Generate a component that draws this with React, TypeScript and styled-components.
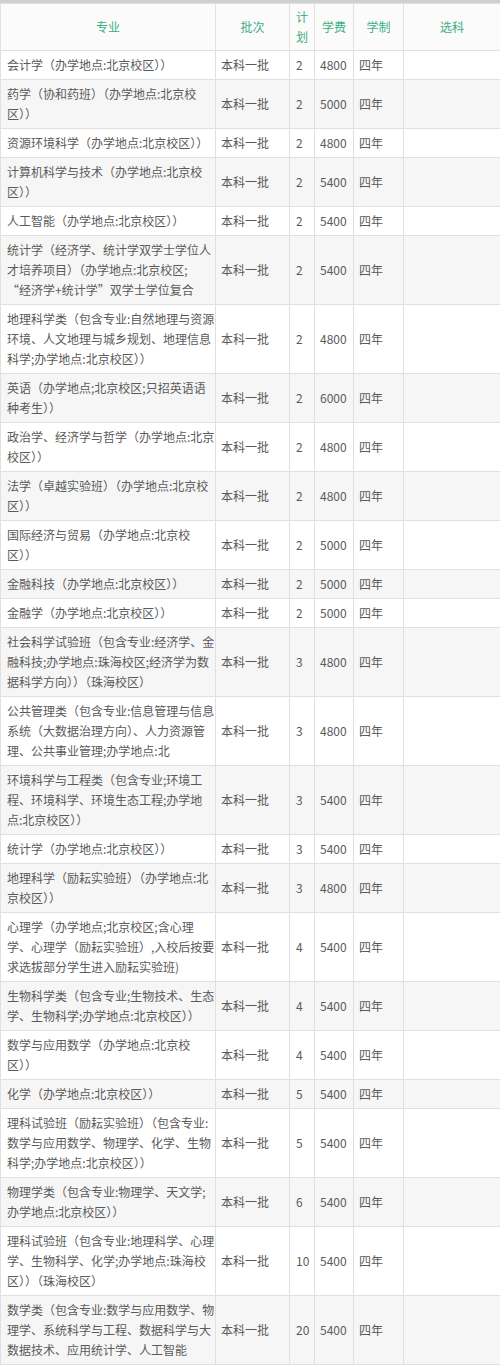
import React from 'react';
import styled, { createGlobalStyle } from 'styled-components';

const GlobalStyle = createGlobalStyle`
    html, body {
        margin: 0;
        padding: 0;
        background: #ffffff;
    }
    body {
        font-family: "Microsoft YaHei", "Noto Sans CJK SC", "Noto Sans", sans-serif;
        color: #555;
    }
`;

const Wrapper = styled.div`
    width: 500px;
    border-top: 3px solid #cfcfcf;
    overflow: hidden;
`;

const Table = styled.table`
    width: 500px;
    table-layout: fixed;
    border-collapse: collapse;
    font-size: 12px;
    line-height: 20px;
`;

const HeadCell = styled.th`
    border: 1px solid #e0e0e0;
    padding: 3px 0;
    height: 40px;
    font-weight: normal;
    color: #3fae86;
    text-align: center;
    vertical-align: middle;
    background: #fbfbfb;
`;

const Row = styled.tr<{ $striped: boolean }>`
    background: ${({ $striped }) => ($striped ? '#f6f6f6' : '#ffffff')};
`;

const Cell = styled.td<{ $pad?: number }>`
    border: 1px solid #e0e0e0;
    padding: 4px 0 4px ${({ $pad }) => $pad ?? 6}px;
    vertical-align: middle;
    color: #5a5a5a;
    white-space: nowrap;
    overflow: hidden;
`;

const Line = styled.div`
    white-space: nowrap;
    height: 20px;
`;

type Major = {
    lines: string[];
    plan: string;
    fee: string;
};

const majors: Major[] = [
    { lines: ['会计学（办学地点:北京校区））'], plan: '2', fee: '4800' },
    { lines: ['药学（协和药班）（办学地点:北京校', '区））'], plan: '2', fee: '5000' },
    { lines: ['资源环境科学（办学地点:北京校区））'], plan: '2', fee: '4800' },
    { lines: ['计算机科学与技术（办学地点:北京校', '区））'], plan: '2', fee: '5400' },
    { lines: ['人工智能（办学地点:北京校区））'], plan: '2', fee: '5400' },
    {
        lines: ['统计学（经济学、统计学双学士学位人', '才培养项目）（办学地点:北京校区;', '“经济学+统计学”双学士学位复合'],
        plan: '2',
        fee: '5400',
    },
    {
        lines: ['地理科学类（包含专业:自然地理与资源', '环境、人文地理与城乡规划、地理信息', '科学;办学地点:北京校区））'],
        plan: '2',
        fee: '4800',
    },
    { lines: ['英语（办学地点;北京校区;只招英语语', '种考生））'], plan: '2', fee: '6000' },
    { lines: ['政治学、经济学与哲学（办学地点:北京', '校区））'], plan: '2', fee: '4800' },
    { lines: ['法学（卓越实验班）（办学地点:北京校', '区））'], plan: '2', fee: '4800' },
    { lines: ['国际经济与贸易（办学地点:北京校', '区））'], plan: '2', fee: '5000' },
    { lines: ['金融科技（办学地点:北京校区））'], plan: '2', fee: '5000' },
    { lines: ['金融学（办学地点:北京校区））'], plan: '2', fee: '5000' },
    {
        lines: ['社会科学试验班（包含专业:经济学、金', '融科技;办学地点:珠海校区;经济学为数', '据科学方向））（珠海校区）'],
        plan: '3',
        fee: '4800',
    },
    {
        lines: ['公共管理类（包含专业:信息管理与信息', '系统（大数据治理方向）、人力资源管', '理、公共事业管理;办学地点:北'],
        plan: '3',
        fee: '4800',
    },
    {
        lines: ['环境科学与工程类（包含专业;环境工', '程、环境科学、环境生态工程;办学地', '点:北京校区））'],
        plan: '3',
        fee: '5400',
    },
    { lines: ['统计学（办学地点:北京校区））'], plan: '3', fee: '5400' },
    { lines: ['地理科学（励耘实验班）（办学地点:北', '京校区））'], plan: '3', fee: '4800' },
    {
        lines: ['心理学（办学地点;北京校区;含心理', '学、心理学（励耘实验班）,入校后按要', '求选拔部分学生进入励耘实验班)'],
        plan: '4',
        fee: '5400',
    },
    { lines: ['生物科学类（包含专业;生物技术、生态', '学、生物科学;办学地点:北京校区））'], plan: '4', fee: '5400' },
    { lines: ['数学与应用数学（办学地点:北京校', '区））'], plan: '4', fee: '5400' },
    { lines: ['化学（办学地点:北京校区））'], plan: '5', fee: '5400' },
    {
        lines: ['理科试验班（励耘实验班）（包含专业:', '数学与应用数学、物理学、化学、生物', '科学;办学地点:北京校区））'],
        plan: '5',
        fee: '5400',
    },
    { lines: ['物理学类（包含专业:物理学、天文学;', '办学地点:北京校区））'], plan: '6', fee: '5400' },
    {
        lines: ['理科试验班（包含专业:地理科学、心理', '学、生物科学、化学;办学地点:珠海校', '区））（珠海校区）'],
        plan: '10',
        fee: '5400',
    },
    {
        lines: ['数学类（包含专业:数学与应用数学、物', '理学、系统科学与工程、数据科学与大', '数据技术、应用统计学、人工智能'],
        plan: '20',
        fee: '5400',
    },
];

const widths = [215, 74, 25, 39, 50, 97];

export default function App() {
    return (
        <Wrapper>
            <GlobalStyle />
            <Table>
                <colgroup>
                    {widths.map((w, i) => (
                        <col key={i} style={{ width: w }} />
                    ))}
                </colgroup>
                <thead>
                    <tr>
                        <HeadCell>专业</HeadCell>
                        <HeadCell>批次</HeadCell>
                        <HeadCell>
                            计<br />划
                        </HeadCell>
                        <HeadCell>学费</HeadCell>
                        <HeadCell>学制</HeadCell>
                        <HeadCell>选科</HeadCell>
                    </tr>
                </thead>
                <tbody>
                    {majors.map((m, i) => (
                        <Row key={i} $striped={i % 2 === 1}>
                            <Cell $pad={6}>
                                {m.lines.map((l, j) => (
                                    <Line key={j}>{l}</Line>
                                ))}
                            </Cell>
                            <Cell $pad={5}>本科一批</Cell>
                            <Cell $pad={6}>{m.plan}</Cell>
                            <Cell $pad={5}>{m.fee}</Cell>
                            <Cell $pad={5}>四年</Cell>
                            <Cell />
                        </Row>
                    ))}
                </tbody>
            </Table>
        </Wrapper>
    );
}
